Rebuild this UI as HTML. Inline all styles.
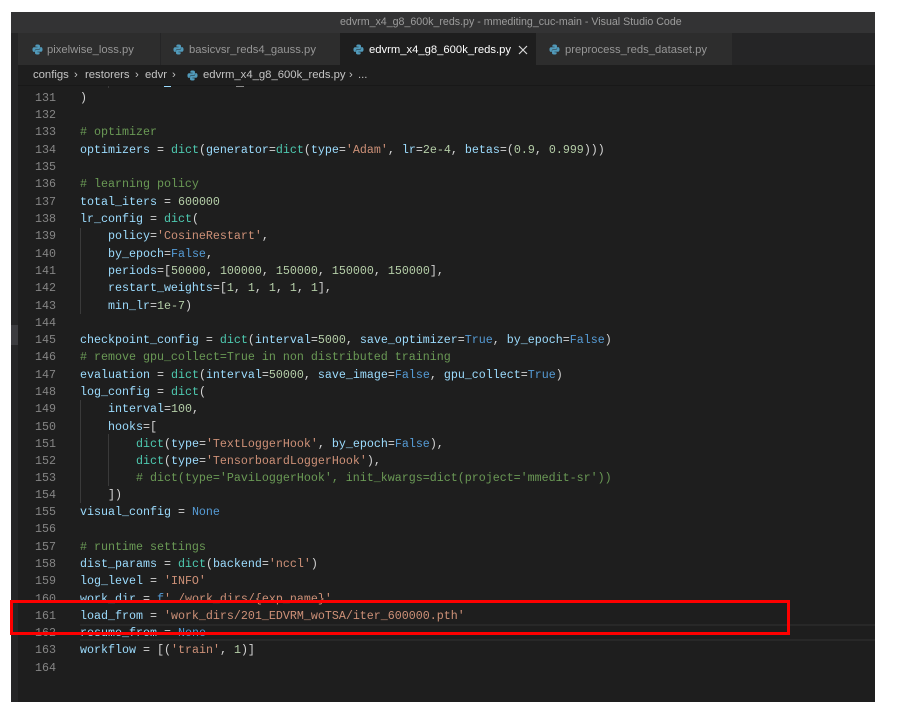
<!DOCTYPE html>
<html>
<head>
<meta charset="utf-8">
<style>
html,body{margin:0;padding:0;background:#fff;width:903px;height:727px;overflow:hidden}
body{position:relative;font-family:"Liberation Sans",sans-serif}
.a{position:absolute}
#win{left:11px;top:12px;width:864px;height:690px;background:#1e1e1e}
#title{left:11px;top:12px;width:864px;height:21px;background:#333334;color:#9c9c9c;font-size:10.65px;line-height:20px;white-space:pre}
#title span{position:absolute;left:329px;top:0}
#tabbar{left:11px;top:33px;width:864px;height:32px;background:#252526}
.tab{top:33px;height:32px;background:#2d2d2d;color:#969696;font-size:11.25px;line-height:34px;white-space:pre;box-sizing:border-box}
.tab span{position:absolute;top:0}
.tab svg{position:absolute;top:11px}
#side{left:11px;top:33px;width:7px;height:669px;background:#252526}
#crumb{left:18px;top:65px;width:857px;height:20px;background:#1e1e1e;border-bottom:1px solid #181818;color:#c4c4c4;font-size:11.3px;line-height:20px;white-space:pre}
#thumb{left:11px;top:325px;width:7px;height:20px;background:#3c3c3f}
#code{left:0;top:0;width:875px;height:702px;font-family:"Liberation Mono",monospace;font-size:11.67px;filter:blur(.3px)}
.l{position:absolute;left:80px;height:17px;line-height:17px;white-space:pre;color:#9cdcfe}
.n{position:absolute;left:26px;width:30px;text-align:right;height:17px;line-height:17px;color:#858585}
.f{color:#4ec9b0}.s{color:#ce9178}.d{color:#b5cea8}.c{color:#6a9955}.k{color:#569cd6}.o{color:#d4d4d4}.y{color:#dcdcaa}
.g{position:absolute;width:1px;background:#3a3a3a}
.hl{left:80px;width:795px;height:2px;background:#282828}
#box{left:10px;top:600px;width:780px;height:35px;box-sizing:border-box;border:3px solid #fe0000}
</style>
</head>
<body>
<div class="a" id="win"></div>
<div class="a" id="title"><span>edvrm_x4_g8_600k_reds.py - mmediting_cuc-main - Visual Studio Code</span></div>
<div class="a" id="tabbar"></div>
<div class="a" id="side"></div>

<svg width="0" height="0" style="position:absolute"><defs>
<symbol id="py" viewBox="0 0 12 12">
<path fill="#519aba" d="M6 .5C3.6.5 3.7 1.6 3.7 1.6V3h2.4v.5H2.4S.5 3.3.5 6s1.6 2.6 1.6 2.6h1V7.3s0-1.6 1.6-1.6h2.5s1.5 0 1.5-1.5V2S8.9.5 6 .5z"/>
<path fill="#519aba" d="M6 11.5c2.4 0 2.3-1.1 2.3-1.1V9H5.9v-.5h3.7s1.9.2 1.9-2.5-1.6-2.6-1.6-2.6h-1v1.3s0 1.6-1.6 1.6H4.8s-1.5 0-1.5 1.5V10s-.2 1.5 2.7 1.5z"/>
</symbol>
</defs></svg>

<div class="a tab" style="left:18px;width:142px"><svg width="11" height="11" style="left:14px"><use href="#py"/></svg><span style="left:29px">pixelwise_loss.py</span></div>
<div class="a tab" style="left:161px;width:179px"><svg width="11" height="11" style="left:12px"><use href="#py"/></svg><span style="left:28px">basicvsr_reds4_gauss.py</span></div>
<div class="a tab" style="left:340px;width:196px;background:#1e1e1e;color:#fff"><svg width="11" height="11" style="left:13px"><use href="#py"/></svg><span style="left:29px">edvrm_x4_g8_600k_reds.py</span>
<svg width="10" height="10" style="left:178px;top:12px" viewBox="0 0 10 10"><path d="M1 1L9 9M9 1L1 9" stroke="#d8d8d8" stroke-width="1.2" fill="none"/></svg></div>
<div class="a tab" style="left:536px;width:196px"><svg width="11" height="11" style="left:13px"><use href="#py"/></svg><span style="left:29px">preprocess_reds_dataset.py</span></div>

<div class="a" id="code">
<div class="g" style="left:108px;top:85px;height:3px"></div>
<div class="a" style="left:164px;top:86px;width:7px;height:1px;background:#9cdcfe"></div>
<div class="a" style="left:236px;top:85px;width:8px;height:2px;background:#8a8a8a"></div>

<div class="g" style="left:80px;top:228px;height:86px"></div>
<div class="g" style="left:80px;top:400px;height:103px"></div>
<div class="g" style="left:108px;top:434px;height:52px"></div>
<div class="a hl" style="top:624px"></div>
<div class="a hl" style="top:639px"></div>

<div class="n" style="top:90px">131</div><div class="l o" style="top:90px">)</div>
<div class="n" style="top:107px">132</div>
<div class="n" style="top:124px">133</div><div class="l c" style="top:124px"># optimizer</div>
<div class="n" style="top:142px">134</div><div class="l" style="top:142px">optimizers <span class="o">=</span> <span class="f">dict</span><span class="o">(</span>generator<span class="o">=</span><span class="f">dict</span><span class="o">(</span>type<span class="o">=</span><span class="s">'Adam'</span><span class="o">,</span> lr<span class="o">=</span><span class="d">2e-4</span><span class="o">,</span> betas<span class="o">=(</span><span class="d">0.9</span><span class="o">,</span> <span class="d">0.999</span><span class="o">)))</span></div>
<div class="n" style="top:159px">135</div>
<div class="n" style="top:176px">136</div><div class="l c" style="top:176px"># learning policy</div>
<div class="n" style="top:194px">137</div><div class="l" style="top:194px">total_iters <span class="o">=</span> <span class="d">600000</span></div>
<div class="n" style="top:211px">138</div><div class="l" style="top:211px">lr_config <span class="o">=</span> <span class="f">dict</span><span class="o">(</span></div>
<div class="n" style="top:228px">139</div><div class="l" style="top:228px">    policy<span class="o">=</span><span class="s">'CosineRestart'</span><span class="o">,</span></div>
<div class="n" style="top:246px">140</div><div class="l" style="top:246px">    by_epoch<span class="o">=</span><span class="k">False</span><span class="o">,</span></div>
<div class="n" style="top:263px">141</div><div class="l" style="top:263px">    periods<span class="o">=[</span><span class="d">50000</span><span class="o">,</span> <span class="d">100000</span><span class="o">,</span> <span class="d">150000</span><span class="o">,</span> <span class="d">150000</span><span class="o">,</span> <span class="d">150000</span><span class="o">],</span></div>
<div class="n" style="top:280px">142</div><div class="l" style="top:280px">    restart_weights<span class="o">=[</span><span class="d">1</span><span class="o">,</span> <span class="d">1</span><span class="o">,</span> <span class="d">1</span><span class="o">,</span> <span class="d">1</span><span class="o">,</span> <span class="d">1</span><span class="o">],</span></div>
<div class="n" style="top:298px">143</div><div class="l" style="top:298px">    min_lr<span class="o">=</span><span class="d">1e-7</span><span class="o">)</span></div>
<div class="n" style="top:315px">144</div>
<div class="n" style="top:332px">145</div><div class="l" style="top:332px">checkpoint_config <span class="o">=</span> <span class="f">dict</span><span class="o">(</span>interval<span class="o">=</span><span class="d">5000</span><span class="o">,</span> save_optimizer<span class="o">=</span><span class="k">True</span><span class="o">,</span> by_epoch<span class="o">=</span><span class="k">False</span><span class="o">)</span></div>
<div class="n" style="top:349px">146</div><div class="l c" style="top:349px"># remove gpu_collect=True in non distributed training</div>
<div class="n" style="top:367px">147</div><div class="l" style="top:367px">evaluation <span class="o">=</span> <span class="f">dict</span><span class="o">(</span>interval<span class="o">=</span><span class="d">50000</span><span class="o">,</span> save_image<span class="o">=</span><span class="k">False</span><span class="o">,</span> gpu_collect<span class="o">=</span><span class="k">True</span><span class="o">)</span></div>
<div class="n" style="top:384px">148</div><div class="l" style="top:384px">log_config <span class="o">=</span> <span class="f">dict</span><span class="o">(</span></div>
<div class="n" style="top:401px">149</div><div class="l" style="top:401px">    interval<span class="o">=</span><span class="d">100</span><span class="o">,</span></div>
<div class="n" style="top:419px">150</div><div class="l" style="top:419px">    hooks<span class="o">=[</span></div>
<div class="n" style="top:436px">151</div><div class="l" style="top:436px">        <span class="f">dict</span><span class="o">(</span>type<span class="o">=</span><span class="s">'TextLoggerHook'</span><span class="o">,</span> by_epoch<span class="o">=</span><span class="k">False</span><span class="o">),</span></div>
<div class="n" style="top:453px">152</div><div class="l" style="top:453px">        <span class="f">dict</span><span class="o">(</span>type<span class="o">=</span><span class="s">'TensorboardLoggerHook'</span><span class="o">),</span></div>
<div class="n" style="top:470px">153</div><div class="l c" style="top:470px">        # dict(type='PaviLoggerHook', init_kwargs=dict(project='mmedit-sr'))</div>
<div class="n" style="top:487px">154</div><div class="l o" style="top:487px">    ])</div>
<div class="n" style="top:504px">155</div><div class="l" style="top:504px">visual_config <span class="o">=</span> <span class="k">None</span></div>
<div class="n" style="top:521px">156</div>
<div class="n" style="top:539px">157</div><div class="l c" style="top:539px"># runtime settings</div>
<div class="n" style="top:556px">158</div><div class="l" style="top:556px">dist_params <span class="o">=</span> <span class="f">dict</span><span class="o">(</span>backend<span class="o">=</span><span class="s">'nccl'</span><span class="o">)</span></div>
<div class="n" style="top:573px">159</div><div class="l" style="top:573px">log_level <span class="o">=</span> <span class="s">'INFO'</span></div>
<div class="n" style="top:591px">160</div><div class="l" style="top:591px">work_dir <span class="o">=</span> <span class="k">f</span><span class="s">'./work_dirs/{exp_name}'</span></div>
<div class="n" style="top:608px">161</div><div class="l" style="top:608px">load_from <span class="o">=</span> <span class="s">'work_dirs/201_EDVRM_woTSA/iter_600000.pth'</span></div>
<div class="n" style="top:625px">162</div><div class="l" style="top:625px">resume_from <span class="o">=</span> <span class="k">None</span></div>
<div class="n" style="top:642px">163</div><div class="l" style="top:642px">workflow <span class="o">=</span> <span class="o">[(</span><span class="s">'train'</span><span class="o">,</span> <span class="d">1</span><span class="o">)]</span></div>
<div class="n" style="top:660px">164</div>
</div>

<div class="a" id="thumb"></div>
<div class="a" id="crumb"><span style="position:absolute;left:15px">configs</span><span style="position:absolute;left:56px">&#8250;</span><span style="position:absolute;left:67px">restorers</span><span style="position:absolute;left:117px">&#8250;</span><span style="position:absolute;left:127px">edvr</span><span style="position:absolute;left:154px">&#8250;</span><svg width="11" height="11" style="position:absolute;left:169px;top:5px"><use href="#py"/></svg><span style="position:absolute;left:185px">edvrm_x4_g8_600k_reds.py</span><span style="position:absolute;left:331px">&#8250;</span><span style="position:absolute;left:340px">...</span></div>
<div class="a" id="box"></div>
</body>
</html>
